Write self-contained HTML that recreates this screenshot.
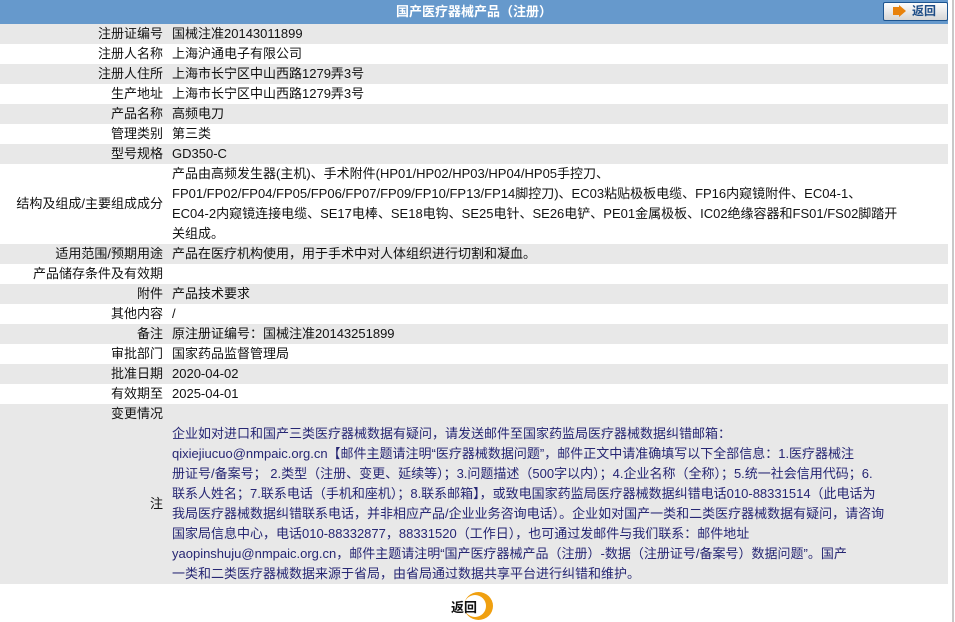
<!DOCTYPE html>
<html><head><meta charset="utf-8"><style>
*{margin:0;padding:0;box-sizing:border-box}
body{width:955px;height:622px;background:#fff;font-family:"Liberation Sans","Noto Sans CJK SC",sans-serif;font-size:13px;color:#111;position:relative;overflow:hidden}
.vl{position:absolute;left:952px;top:0;width:2px;height:622px;background:#c8c8c8}
.hd{position:absolute;left:0;top:0;width:948px;height:24px;background:#6699cc;color:#fff;font-weight:bold;text-align:center;line-height:24px;font-size:13px}
.bk{position:absolute;left:883px;top:2px;width:65px;height:19px;border:1px solid #1d548f;border-radius:2px;background:linear-gradient(#fdfdfd,#d6d6d6);color:#1d4c86;font-weight:bold;font-size:12px;line-height:17px}
.bk span{position:absolute;left:28px;top:0}
.bk i{position:absolute;left:9px;top:4px;width:6px;height:8px;background:#e8820c}
.bk b{position:absolute;left:15px;top:2px;border-left:7px solid #e8820c;border-top:6px solid transparent;border-bottom:6px solid transparent}
table{position:absolute;left:0;top:24px;width:948px;border-collapse:collapse}
td{line-height:20px;padding:0;vertical-align:middle;white-space:nowrap}
td.l{width:163px;text-align:right;padding-right:0}
td.v{padding-left:9px}
tr.g td{background:#e8e8e8}
.n{color:#262673}
.btn{position:absolute;left:451px;top:592px;width:50px;height:28px}
.btn .c{position:absolute;left:13px;top:0;width:29px;height:28px;border-radius:50%;background:#f0a010}
.btn .c2{position:absolute;left:13px;top:3px;width:22px;height:22px;border-radius:50%;background:#fff}
.btn span{position:absolute;left:0;top:5px;font-weight:bold;font-size:13px;color:#111}
</style></head><body>
<div class="vl"></div>
<div class="hd">国产医疗器械产品（注册）</div>
<div class="bk"><i></i><b></b><span>返回</span></div>
<table>
<tr class="g"><td class="l">注册证编号</td><td class="v">国械注准20143011899</td></tr>
<tr><td class="l">注册人名称</td><td class="v">上海沪通电子有限公司</td></tr>
<tr class="g"><td class="l">注册人住所</td><td class="v">上海市长宁区中山西路1279弄3号</td></tr>
<tr><td class="l">生产地址</td><td class="v">上海市长宁区中山西路1279弄3号</td></tr>
<tr class="g"><td class="l">产品名称</td><td class="v">高频电刀</td></tr>
<tr><td class="l">管理类别</td><td class="v">第三类</td></tr>
<tr class="g"><td class="l">型号规格</td><td class="v">GD350-C</td></tr>
<tr><td class="l">结构及组成/主要组成成分</td><td class="v">产品由高频发生器(主机)、手术附件(HP01/HP02/HP03/HP04/HP05手控刀、<br>FP01/FP02/FP04/FP05/FP06/FP07/FP09/FP10/FP13/FP14脚控刀)、EC03粘贴极板电缆、FP16内窥镜附件、EC04-1、<br>EC04-2内窥镜连接电缆、SE17电棒、SE18电钩、SE25电针、SE26电铲、PE01金属极板、IC02绝缘容器和FS01/FS02脚踏开<br>关组成。</td></tr>
<tr class="g"><td class="l">适用范围/预期用途</td><td class="v">产品在医疗机构使用，用于手术中对人体组织进行切割和凝血。</td></tr>
<tr><td class="l">产品储存条件及有效期</td><td class="v"></td></tr>
<tr class="g"><td class="l">附件</td><td class="v">产品技术要求</td></tr>
<tr><td class="l">其他内容</td><td class="v">/</td></tr>
<tr class="g"><td class="l">备注</td><td class="v">原注册证编号：国械注准20143251899</td></tr>
<tr><td class="l">审批部门</td><td class="v">国家药品监督管理局</td></tr>
<tr class="g"><td class="l">批准日期</td><td class="v">2020-04-02</td></tr>
<tr><td class="l">有效期至</td><td class="v">2025-04-01</td></tr>
<tr class="g"><td class="l">变更情况</td><td class="v"></td></tr>
<tr class="g"><td class="l">注</td><td class="v n">企业如对进口和国产三类医疗器械数据有疑问，请发送邮件至国家药监局医疗器械数据纠错邮箱：<br>qixiejiucuo@nmpaic.org.cn【邮件主题请注明“医疗器械数据问题”，邮件正文中请准确填写以下全部信息：1.医疗器械注<br>册证号/备案号； 2.类型（注册、变更、延续等）；3.问题描述（500字以内）；4.企业名称（全称）；5.统一社会信用代码；6.<br>联系人姓名；7.联系电话（手机和座机）；8.联系邮箱】，或致电国家药监局医疗器械数据纠错电话010-88331514（此电话为<br>我局医疗器械数据纠错联系电话，并非相应产品/企业业务咨询电话）。企业如对国产一类和二类医疗器械数据有疑问，请咨询<br>国家局信息中心，电话010-88332877，88331520（工作日），也可通过发邮件与我们联系：邮件地址<br>yaopinshuju@nmpaic.org.cn，邮件主题请注明“国产医疗器械产品（注册）-数据（注册证号/备案号）数据问题”。国产<br>一类和二类医疗器械数据来源于省局，由省局通过数据共享平台进行纠错和维护。</td></tr>
</table>
<div class="btn"><div class="c"></div><div class="c2"></div><span>返回</span></div>
</body></html>
